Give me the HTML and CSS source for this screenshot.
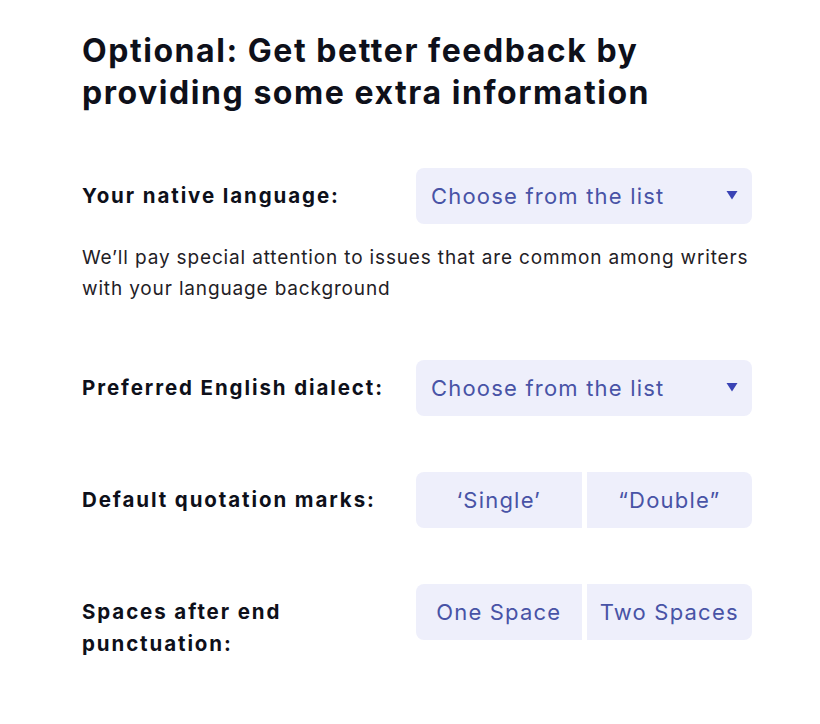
FILE: index.html
```html
<!DOCTYPE html>
<html lang="en">
<head>
<meta charset="utf-8">
<title>Optional feedback info</title>
<link rel="stylesheet" href="styles.css">
</head>
<body>
<main class="panel">
  <h1 class="title">Optional: Get better feedback by providing some extra information</h1>

  <section class="field">
    <div class="row">
      <div class="label">Your native language:</div>
      <div class="select">
        <span>Choose from the list</span>
        <svg class="caret" width="12" height="10" viewBox="0 0 12 10"><path d="M0.5 1h11L6 9.5z" fill="#3a43b5"/></svg>
      </div>
    </div>
    <p class="hint">We’ll pay special attention to issues that are common among writers with your language background</p>
  </section>

  <section class="field">
    <div class="row">
      <div class="label">Preferred English dialect:</div>
      <div class="select">
        <span>Choose from the list</span>
        <svg class="caret" width="12" height="10" viewBox="0 0 12 10"><path d="M0.5 1h11L6 9.5z" fill="#3a43b5"/></svg>
      </div>
    </div>
  </section>

  <section class="field">
    <div class="row">
      <div class="label">Default quotation marks:</div>
      <div class="toggle">
        <div class="opt">‘Single’</div>
        <div class="opt">“Double”</div>
      </div>
    </div>
  </section>

  <section class="field">
    <div class="row">
      <div class="label">Spaces after end punctuation:</div>
      <div class="toggle">
        <div class="opt">One Space</div>
        <div class="opt">Two Spaces</div>
      </div>
    </div>
  </section>
</main>
</body>
</html>
```

FILE: styles.css
```css
html, body {
  margin: 0;
  padding: 0;
  background: #ffffff;
}

body {
  font-family: Inter, "Noto Sans", "Liberation Sans", sans-serif;
  color: #0e101a;
}

.panel {
  width: 670px;
  padding: 30px 0 0 82px;
  display: flex;
  flex-direction: column;
  gap: 56px;
}

.title {
  margin: 0 0 -2px;
  font-size: 32px;
  line-height: 42px;
  font-weight: 700;
  letter-spacing: 1.55px;
  width: 640px;
}

.field {
  display: flex;
  flex-direction: column;
}

.row {
  display: grid;
  grid-template-columns: 334px 336px;
  align-items: start;
}

.label {
  font-size: 20.5px;
  line-height: 32px;
  font-weight: 700;
  letter-spacing: 1.9px;
  padding-top: 12px;
  padding-right: 8px;
}

.select {
  height: 56px;
  box-sizing: border-box;
  background: #eeeffb;
  border-radius: 8px;
  padding: 0 14px 0 15px;
  display: flex;
  align-items: center;
  justify-content: space-between;
  color: #4853a6;
  font-size: 22px;
  letter-spacing: 1.2px;
}

.caret {
  display: block;
  margin-top: -2px;
}

.hint {
  margin: 18px 0 0;
  font-size: 19px;
  line-height: 31px;
  letter-spacing: 0.85px;
  color: #1f2126;
}

.toggle {
  display: grid;
  grid-template-columns: 1fr 1fr;
  gap: 5px;
}

.opt {
  height: 56px;
  background: #eeeffb;
  display: flex;
  align-items: center;
  justify-content: center;
  color: #4853a6;
  font-size: 22px;
  letter-spacing: 1.2px;
}

.opt:first-child {
  border-radius: 8px 0 0 8px;
}

.opt:last-child {
  border-radius: 0 8px 8px 0;
}
```
